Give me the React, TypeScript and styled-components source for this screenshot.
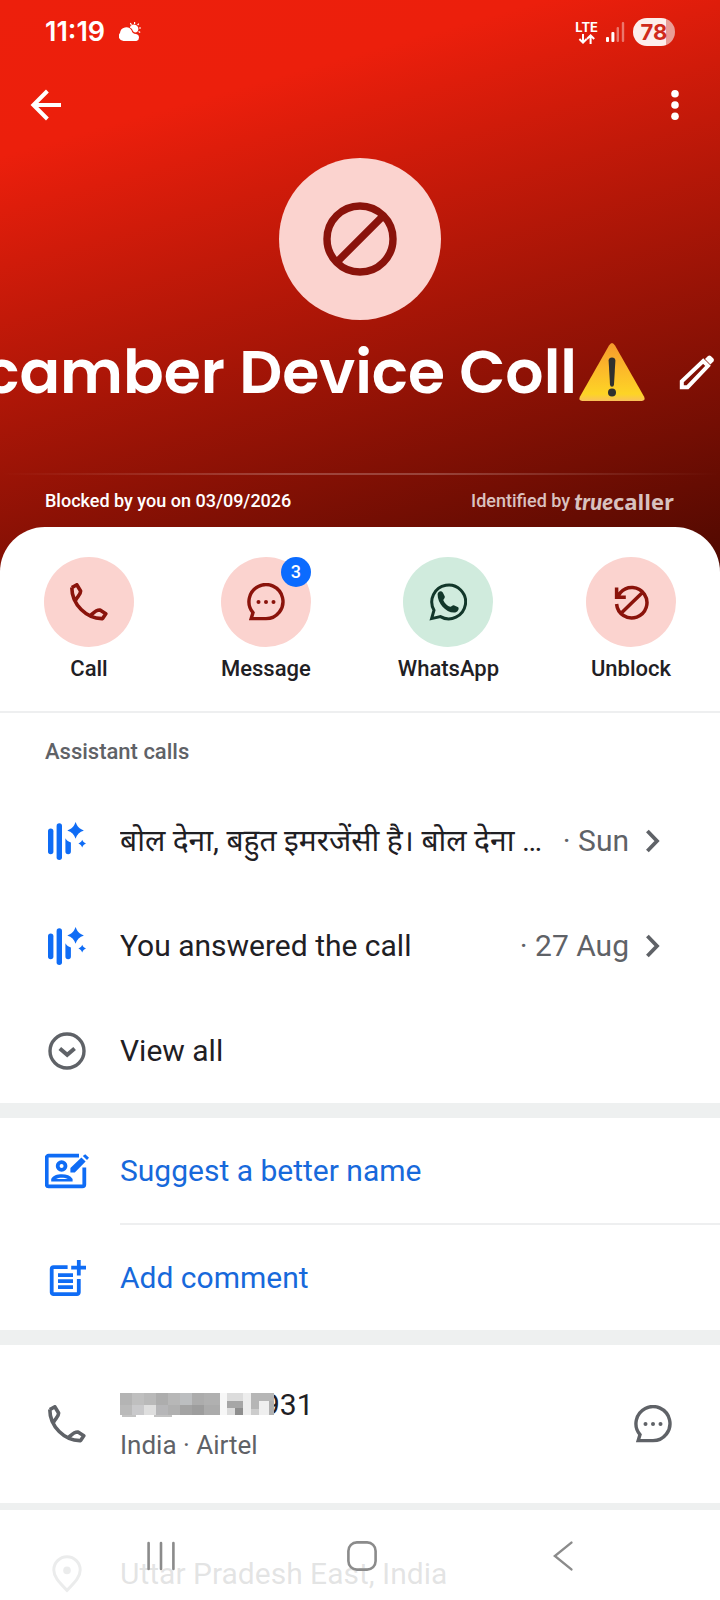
import React from 'react';
import styled, { createGlobalStyle } from 'styled-components';

const GlobalStyle = createGlobalStyle`
  *, *::before, *::after { box-sizing: border-box; }
  html, body { margin: 0; padding: 0; background: #fff; }
  body { font-family: Roboto, "Noto Sans", sans-serif; color: #1f2024; }
  button { font: inherit; color: inherit; background: none; border: 0; padding: 0; margin: 0; cursor: pointer; text-align: left; }
  h1, h2, p { margin: 0; font-weight: 400; }
  svg { display: block; flex: none; }
`;

const Screen = styled.div`
  height: 100vh;
  overflow-x: hidden;
  overflow-y: auto;
  scrollbar-width: none;
  background: #fff;
`;

const Header = styled.header`
  display: flex;
  flex-direction: column;
  align-items: stretch;
  padding-bottom: 45px;
  color: #fff;
  background: linear-gradient(164deg, #ed1f0c 0%, #ec1f0c 20%, #4a0800 102%);
`;

const StatusBar = styled.div`
  display: flex;
  align-items: center;
  height: 62px;
  padding: 1px 45px 0;
  font-family: Inter, sans-serif;
`;

const Clock = styled.span`
  font-size: 27px;
  line-height: 32px;
  font-weight: 600;
  margin-right: 14px;
`;

const StatusRight = styled.div`
  display: flex;
  align-items: center;
  gap: 8px;
  margin-left: auto;
`;

const Network = styled.div`
  display: flex;
  flex-direction: column;
  align-items: center;
  font-size: 13px;
  line-height: 14px;
  font-weight: 700;
`;

const Battery = styled.div`
  width: 42px;
  height: 28px;
  border-radius: 14px;
  background: linear-gradient(90deg, #fdeeec 78%, #ea9d96 78%);
  color: #cf2a1c;
  font-size: 22px;
  line-height: 28px;
  font-weight: 700;
  text-align: center;
`;

const AppBar = styled.div`
  display: flex;
  align-items: center;
  justify-content: space-between;
  height: 84px;
  padding: 1px 25px 0 26px;
`;

const IconButton = styled.button`
  display: grid;
  place-items: center;
  min-width: 40px;
  height: 48px;
`;

const Avatar = styled.div`
  display: grid;
  place-items: center;
  align-self: center;
  width: 162px;
  height: 162px;
  margin-top: 12px;
  border-radius: 50%;
  background: #fbd3cf;
`;

const TitleRow = styled.div`
  display: flex;
  align-items: center;
  justify-content: flex-end;
  height: 84px;
  margin-top: 10px;
  padding-right: 5px;
  overflow: hidden;
`;

const Title = styled.h1`
  display: flex;
  align-items: center;
  gap: 2px;
  margin-right: 34px;
  font-family: Poppins, Inter, sans-serif;
  font-size: 60px;
  line-height: 84px;
  font-weight: 600;
  white-space: nowrap;
`;

const HeaderRule = styled.div`
  height: 2px;
  margin-top: 59px;
  background: linear-gradient(90deg, transparent, rgba(255, 255, 255, 0.22) 40%, rgba(255, 255, 255, 0.22) 60%, transparent);
`;

const HeaderInfo = styled.div`
  display: flex;
  align-items: center;
  justify-content: space-between;
  height: 52px;
  padding: 0 46px 0 45px;
  font-size: 18px;
  line-height: 24px;
  font-weight: 500;
`;

const Identified = styled.span`
  display: flex;
  align-items: center;
  gap: 4px;
  color: rgba(255, 255, 255, 0.76);
`;

const Brand = styled.span`
  font-family: "Open Sans", sans-serif;
  font-size: 22px;
  line-height: 24px;
  font-weight: 700;
`;

const BrandScript = styled.em`
  font-family: Lato, sans-serif;
  font-weight: 900;
`;

const Sheet = styled.main`
  position: relative;
  margin-top: -45px;
  border-radius: 45px 45px 0 0;
  background: #fff;
`;

const Actions = styled.div`
  display: flex;
  justify-content: space-between;
  padding: 30px 44px 26px;
  border-bottom: 2px solid #eeeff0;
`;

const Action = styled.button`
  display: flex;
  flex-direction: column;
  align-items: center;
  gap: 6px;
  min-width: 90px;
  font-size: 22px;
  line-height: 32px;
  font-weight: 500;
`;

const ActionDisc = styled.span<{ $tone: 'red' | 'green' }>`
  position: relative;
  display: grid;
  place-items: center;
  width: 90px;
  height: 90px;
  border-radius: 50%;
  color: ${(p) => (p.$tone === 'red' ? '#8a130b' : '#12372a')};
  background: ${(p) => (p.$tone === 'red' ? '#fbd3cf' : '#d0ebdd')};
`;

const Badge = styled.span`
  position: absolute;
  top: 0;
  right: 0;
  width: 30px;
  height: 30px;
  border-radius: 50%;
  background: #0b6bff;
  color: #fff;
  font-size: 18px;
  line-height: 30px;
  text-align: center;
`;

const SectionTitle = styled.h2`
  padding: 22px 45px 19px;
  font-size: 22px;
  line-height: 34px;
  font-weight: 500;
  color: #5f6267;
`;

const Row = styled.button<{ $height?: number; $end?: number; $tint?: string }>`
  display: flex;
  align-items: center;
  width: 100%;
  height: ${(p) => p.$height ?? 105}px;
  padding: 0 ${(p) => p.$end ?? 60}px 0 44px;
  font-size: 30px;
  line-height: 40px;
  color: ${(p) => p.$tint ?? '#1f2024'};
`;

const RowIcon = styled.span<{ $tint: string }>`
  display: grid;
  place-items: center;
  flex: none;
  width: 46px;
  margin-right: 30px;
  color: ${(p) => p.$tint};
`;

const RowText = styled.span`
  flex: 1;
  min-width: 0;
  overflow: hidden;
  white-space: nowrap;
`;

const RowDate = styled.span`
  flex: none;
  margin-right: 16px;
  color: #5f6267;
`;

const RowRule = styled.div`
  height: 2px;
  margin-left: 120px;
  background: #eeeff0;
`;

const Band = styled.div<{ $height: number }>`
  height: ${(p) => p.$height}px;
  background: #eef0f0;
`;

const NumberBlock = styled.div`
  display: flex;
  align-items: center;
  height: 158px;
  padding: 0 48px 0 44px;
  font-size: 30px;
  line-height: 40px;
`;

const NumberText = styled.div`
  flex: 1;
  padding-top: 2px;
`;

const PhoneNumber = styled.p`
  display: flex;
  align-items: center;
`;

const Mosaic = styled.svg`
  position: relative;
  margin-right: -11px;
`;

const Carrier = styled.p`
  font-size: 26px;
  line-height: 40px;
  color: #5f6267;
`;

const NavBar = styled.nav`
  position: fixed;
  left: 0;
  right: 0;
  bottom: 0;
  display: grid;
  grid-template-columns: repeat(3, 1fr);
  height: 90px;
  padding: 2px 56px 0 60px;
  color: #8b8b8b;
  background: rgba(255, 255, 255, 0.88);
`;

const NavButton = styled.button`
  display: grid;
  place-items: center;
`;

const BLUE = '#0f6cf5';
const GREY = '#5f6267';

const PhoneIcon = () => (
  <svg width="38" height="38" viewBox="0 0 38 38" fill="none" stroke="currentColor" strokeWidth="3.6" strokeLinejoin="round">
    <path d="M1.8 4.6C1.8 21.5 16.5 36 32.6 35.6L35.8 30.8 30 27C26.2 26.6 24 29.4 20.8 32.2M1.8 4.6L6.8 1.8 10.6 8C10.8 11.6 7.4 13.6 5.6 17.2" />
  </svg>
);

const MessageIcon = () => (
  <svg width="38" height="38" viewBox="0 0 38 38" fill="none" stroke="currentColor" strokeWidth="3.4">
    <path d="M19 35.6H4.2L6 29.6A17 17 0 1 1 19 35.6Z" />
    <g fill="currentColor" stroke="none">
      <circle cx="11.5" cy="19" r="2" />
      <circle cx="19" cy="19" r="2" />
      <circle cx="26.5" cy="19" r="2" />
    </g>
  </svg>
);

const WhatsAppIcon = () => (
  <svg width="38" height="38" viewBox="0 0 38 38">
    <path d="M2.6 35.6L5 27.2A16.9 16.9 0 1 1 11.4 33.6Z" fill="none" stroke="currentColor" strokeWidth="3" />
    <path d="M8.6 11.4C8.6 8.6 12 7 13.8 9.4L15.8 13.4C16.2 15 14 16.2 14.4 17.4 16 20.6 18.4 22.8 21.2 23.8 22.4 24 23.2 22 24.8 22.2L29.2 24.2C30.6 26 28.6 29.6 25 29.6 16.4 29.4 8.6 20 8.6 11.4Z" fill="currentColor" />
  </svg>
);

const UnblockIcon = () => (
  <svg width="38" height="38" viewBox="0 0 38 38" fill="none" stroke="currentColor" strokeWidth="3.5">
    <path d="M4.6 4.6V14.2H13.8M5.4 13.6L8.4 9.6A15.2 15.2 0 1 1 4.6 21M9.6 29.8L31 9" />
  </svg>
);

const AssistantIcon = () => (
  <svg width="38" height="38" viewBox="0 0 38 38" fill={BLUE}>
    <rect x="0" y="6.6" width="5.4" height="25.6" rx="2.7" />
    <rect x="8.6" y="1.2" width="5.4" height="36.8" rx="2.7" />
    <path d="M17.4 16.2C18.6 18.4 20.6 19.8 22.9 20.4V29.4A2.75 2.75 0 0 1 17.4 29.4Z" />
    <path d="M27.6 0C29.2 4.6 31.3 6.8 35.9 8.4 31.3 10 29.2 12.2 27.6 16.8 26 12.2 23.9 10 19.3 8.4 23.9 6.8 26 4.6 27.6 0Z" />
    <path d="M34.2 17.8C35.2 20 35.8 20.6 38 21.6 35.8 22.6 35.2 23.2 34.2 25.4 33.2 23.2 32.6 22.6 30.4 21.6 32.6 20.6 33.2 20 34.2 17.8Z" />
  </svg>
);

const ExpandIcon = () => (
  <svg width="38" height="38" viewBox="0 0 38 38" fill="none" stroke="currentColor" strokeWidth="3.4">
    <circle cx="19" cy="19" r="17" />
    <path d="M11.8 16.4L19.2 22.8 26.6 16.4" strokeWidth="4" />
  </svg>
);

const SuggestIcon = () => (
  <svg width="44" height="36" viewBox="0 0 44 36" fill="none" stroke={BLUE} strokeWidth="3.8">
    <path d="M34 2.7H3.6A1.9 1.9 0 0 0 1.7 4.6V31.4A1.9 1.9 0 0 0 3.6 33.3H37.4A1.9 1.9 0 0 0 39.3 31.4V14.6" />
    <circle cx="16.6" cy="13" r="3.9" />
    <path d="M6.2 28.4V26C8 22.6 12 21.2 16.8 21.2S25.4 22.6 27.6 26V28.4Z" fill={BLUE} stroke="none" />
    <path d="M11 26C14 24.4 19.6 24.4 22.8 26Z" fill="#fff" stroke="none" />
    <path d="M25.4 19.6V15L36.4 4.4 40.6 8.4 29.8 19.6ZM37.8 3L40.2 1.2 44 4.8 42 7Z" fill={BLUE} stroke="none" />
  </svg>
);

const CommentIcon = () => (
  <svg width="38" height="36" viewBox="-2 0 38 36" fill="none" stroke={BLUE} strokeWidth="3.8">
    <path d="M17.6 7.2H3.6A1.9 1.9 0 0 0 1.7 9.1V32.4A1.9 1.9 0 0 0 3.6 34.1H26.9A1.9 1.9 0 0 0 28.8 32.4V19M28.8 0V15.4M21.2 7.6H36M8 15.2H23M8 21.2H23M8 27.2H23" />
  </svg>
);

const PinIcon = () => (
  <svg width="30" height="38" viewBox="0 0 30 38" fill="none" stroke="currentColor" strokeWidth="3">
    <path d="M15 35.4C6 26 1.8 21.4 1.8 15A13.2 13.2 0 0 1 28.2 15C28.2 21.4 24 26 15 35.4Z" />
    <circle cx="15" cy="15.4" r="3.8" fill="currentColor" stroke="none" />
  </svg>
);

const ChevronIcon = () => (
  <svg width="15" height="24" viewBox="0 0 15 24" fill="none" stroke={GREY} strokeWidth="3.8">
    <path d="M2.4 2L12 12 2.4 22" />
  </svg>
);

const mosaicTop = ['#b4b4b4', '#bfbfbf', '#b9b9b9', '#adadad', '#b7b7b7', '#bcbec0', '#acacac', '#b0b0b0'];
const mosaicMid = ['#bababa', '#c9c9cb', '#dedede', '#b6b6b8', '#b0b0b0', '#a3a3a3', '#9d9d9d', '#ababab'];

const NumberMosaic = () => (
  <Mosaic width="154" height="25" viewBox="0 0 154 25" shapeRendering="crispEdges" aria-hidden="true">
    <rect width="154" height="22" fill="#dcdcdc" />
    {mosaicTop.map((c, i) => (
      <rect key={i} x={i * 12} y="0" width={i === 7 ? 16 : 12} height="12" fill={c} />
    ))}
    {mosaicMid.map((c, i) => (
      <rect key={i} x={i * 12} y="12" width={i === 7 ? 16 : 12} height="10" fill={c} />
    ))}
    <path d="M100 0H107V22H100Z" fill="#f7f7f7" />
    <path d="M107 8H123V15H107Z" fill="#a6a6a6" />
    <path d="M115 15H123V22H115Z" fill="#8e8e8e" />
    <path d="M123 0H131V22H123Z" fill="#ededed" />
    <path d="M131 0H139V16H131ZM139 0H154V8H139Z" fill="#b6b6b6" />
    <path d="M131 16H139V22H131Z" fill="#cccccc" />
    <path d="M139 8H149V22H139Z" fill="#efefef" />
    <path d="M149 8H154V22H149Z" fill="#b0b0b0" />
    <path d="M2 22H16V24H2ZM34 22H52V24H34Z" fill="#c3c3c3" />
  </Mosaic>
);

const actions: { label: string; tone: 'red' | 'green'; Icon: React.FC; badge?: string }[] = [
  { label: 'Call', tone: 'red', Icon: PhoneIcon },
  { label: 'Message', tone: 'red', Icon: MessageIcon, badge: '3' },
  { label: 'WhatsApp', tone: 'green', Icon: WhatsAppIcon },
  { label: 'Unblock', tone: 'red', Icon: UnblockIcon },
];

const calls = [
  { text: 'बोल देना, बहुत इमरजेंसी है। बोल देना …', date: '· Sun' },
  { text: 'You answered the call', date: '· 27 Aug' },
];

const RowIconButton = styled.button`
  display: grid;
  place-items: center;
  color: ${GREY};
`;

export default function App() {
  return (
    <>
      <GlobalStyle />
      <Screen>
        <Header>
          <StatusBar>
            <Clock>11:19</Clock>
            <svg width="22" height="20" viewBox="0 0 22 20" fill="#fff">
              <path d="M4.8 19A4.8 4.8 0 0 1 1 11 6.2 6.2 0 0 1 12.6 8.6C13 10.6 14.6 12 17 12A3.6 3.6 0 0 1 17.4 19Z" />
              <path d="M10.8 5.6A4.4 4.4 0 1 1 18.6 9.4C16.6 11.4 14.2 10.2 13.6 8.2 13 6.8 12 6 10.8 5.6Z" />
              <path d="M15.6 0V2M11.4 1L12.4 3M19.8 1.6L18.6 3.2M20 6H22M19.6 9.4L21.2 10.4" stroke="#fff" strokeWidth="1.2" />
            </svg>
            <StatusRight>
              <Network>
                LTE
                <svg width="18" height="10" viewBox="0 0 18 10" fill="none" stroke="#fff" strokeWidth="2">
                  <path d="M5 0V8.6M1.4 5L5 8.6 8.6 5M12.6 10V1.4M9 5L12.6 1.4 16.2 5" />
                </svg>
              </Network>
              <svg width="19" height="20" viewBox="0 0 19 20" fill="#fff">
                <rect x="0" y="15" width="3" height="5" rx="1" />
                <rect x="5.4" y="10" width="3" height="10" rx="1" />
                <rect x="10.6" y="5" width="2.4" height="15" rx="1" opacity=".4" />
                <rect x="15.8" y="0" width="2.4" height="20" rx="1" opacity=".4" />
              </svg>
              <Battery>78</Battery>
            </StatusRight>
          </StatusBar>
          <AppBar>
            <IconButton aria-label="Back">
              <svg width="32" height="32" viewBox="0 0 32 32" fill="none" stroke="#fff" strokeWidth="4">
                <path d="M31 16H4M17.4 2L3.4 16 17.4 30" />
              </svg>
            </IconButton>
            <IconButton aria-label="More options">
              <svg width="8" height="32" viewBox="0 0 8 32" fill="#fff">
                <circle cx="4" cy="4.8" r="3.8" />
                <circle cx="4" cy="16" r="3.8" />
                <circle cx="4" cy="27.2" r="3.8" />
              </svg>
            </IconButton>
          </AppBar>
          <Avatar>
            <svg width="74" height="74" viewBox="0 0 74 74" fill="none" stroke="#8a130b" strokeWidth="7.4">
              <circle cx="37" cy="37" r="33" />
              <path d="M13.6 60.4L60.4 13.6" />
            </svg>
          </Avatar>
          <TitleRow>
            <Title>
              camber Device Coll
              <svg width="66" height="60" viewBox="0 0 66 60" role="img" aria-label="Warning">
                <defs>
                  <linearGradient id="warn" x1="0" y1="0" x2="0" y2="1">
                    <stop offset="0" stopColor="#f59a2c" />
                    <stop offset=".45" stopColor="#fcb92a" />
                    <stop offset=".88" stopColor="#fdd426" />
                    <stop offset="1" stopColor="#f9c05a" />
                  </linearGradient>
                </defs>
                <path d="M30 3.6Q33 -1.4 36 3.6L65 54.6Q67 59 62.4 59H3.6Q-1 59 1 54.6Z" fill="url(#warn)" />
                <path d="M29.6 18.6Q29.8 15.4 33 15.4T36.4 18.6L35 42.6Q34.8 44.8 33 44.8T31 42.6Z" fill="#30302e" />
                <circle cx="33" cy="50.4" r="4" fill="#30302e" />
              </svg>
            </Title>
            <button aria-label="Edit name">
              <svg width="36" height="36" viewBox="0 0 36 36">
                <path d="M2.8 33.2V27.4L24.2 7 29 11.8 8.6 33.2Z" fill="none" stroke="#fff" strokeWidth="4" />
                <path d="M26 5L29 2Q30.4.8 31.8 2L34.4 4.6Q35.6 6 34.4 7.4L31.4 10.4Z" fill="#fff" />
              </svg>
            </button>
          </TitleRow>
          <HeaderRule />
          <HeaderInfo>
            <span>Blocked by you on 03/09/2026</span>
            <Identified>
              Identified by
              <Brand><BrandScript>true</BrandScript>caller</Brand>
            </Identified>
          </HeaderInfo>
        </Header>

        <Sheet>
          <Actions>
            {actions.map(({ label, tone, Icon, badge }) => (
              <Action key={label}>
                <ActionDisc $tone={tone}>
                  <Icon />
                  {badge && <Badge>{badge}</Badge>}
                </ActionDisc>
                {label}
              </Action>
            ))}
          </Actions>

          <section>
            <SectionTitle>Assistant calls</SectionTitle>
            {calls.map((call) => (
              <Row key={call.date}>
                <RowIcon $tint={BLUE}><AssistantIcon /></RowIcon>
                <RowText>{call.text}</RowText>
                <RowDate>{call.date}</RowDate>
                <ChevronIcon />
              </Row>
            ))}
            <Row>
              <RowIcon $tint={GREY}><ExpandIcon /></RowIcon>
              <RowText>View all</RowText>
            </Row>
          </section>

          <Band $height={15} />
          <Row $tint="#1769db">
            <RowIcon $tint={BLUE}><SuggestIcon /></RowIcon>
            <RowText>Suggest a better name</RowText>
          </Row>
          <RowRule />
          <Row $tint="#1769db">
            <RowIcon $tint={BLUE}><CommentIcon /></RowIcon>
            <RowText>Add comment</RowText>
          </Row>

          <Band $height={15} />
          <NumberBlock>
            <RowIcon $tint={GREY}><PhoneIcon /></RowIcon>
            <NumberText>
              <PhoneNumber><NumberMosaic />931</PhoneNumber>
              <Carrier>India · Airtel</Carrier>
            </NumberText>
            <RowIconButton aria-label="Send message"><MessageIcon /></RowIconButton>
          </NumberBlock>

          <Band $height={7} />
          <Row $height={128}>
            <RowIcon $tint={GREY}><PinIcon /></RowIcon>
            <RowText>Uttar Pradesh East, India</RowText>
          </Row>
        </Sheet>
      </Screen>

      <NavBar aria-label="System navigation">
        <NavButton aria-label="Recent apps">
          <svg width="28" height="30" viewBox="0 0 28 30" stroke="currentColor" strokeWidth="2.6" strokeLinecap="round">
            <path d="M1.6 2V28M14 2V28M26.4 2V28" />
          </svg>
        </NavButton>
        <NavButton aria-label="Home">
          <svg width="30" height="30" viewBox="0 0 30 30" fill="none" stroke="currentColor" strokeWidth="2.6">
            <rect x="1.4" y="1.4" width="27.2" height="27.2" rx="8.5" />
          </svg>
        </NavButton>
        <NavButton aria-label="Back">
          <svg width="20" height="30" viewBox="0 0 20 30" fill="none" stroke="currentColor" strokeWidth="2.4" strokeLinecap="round">
            <path d="M18.4 1.6L1.8 15 18.4 28.4" />
          </svg>
        </NavButton>
      </NavBar>
    </>
  );
}
